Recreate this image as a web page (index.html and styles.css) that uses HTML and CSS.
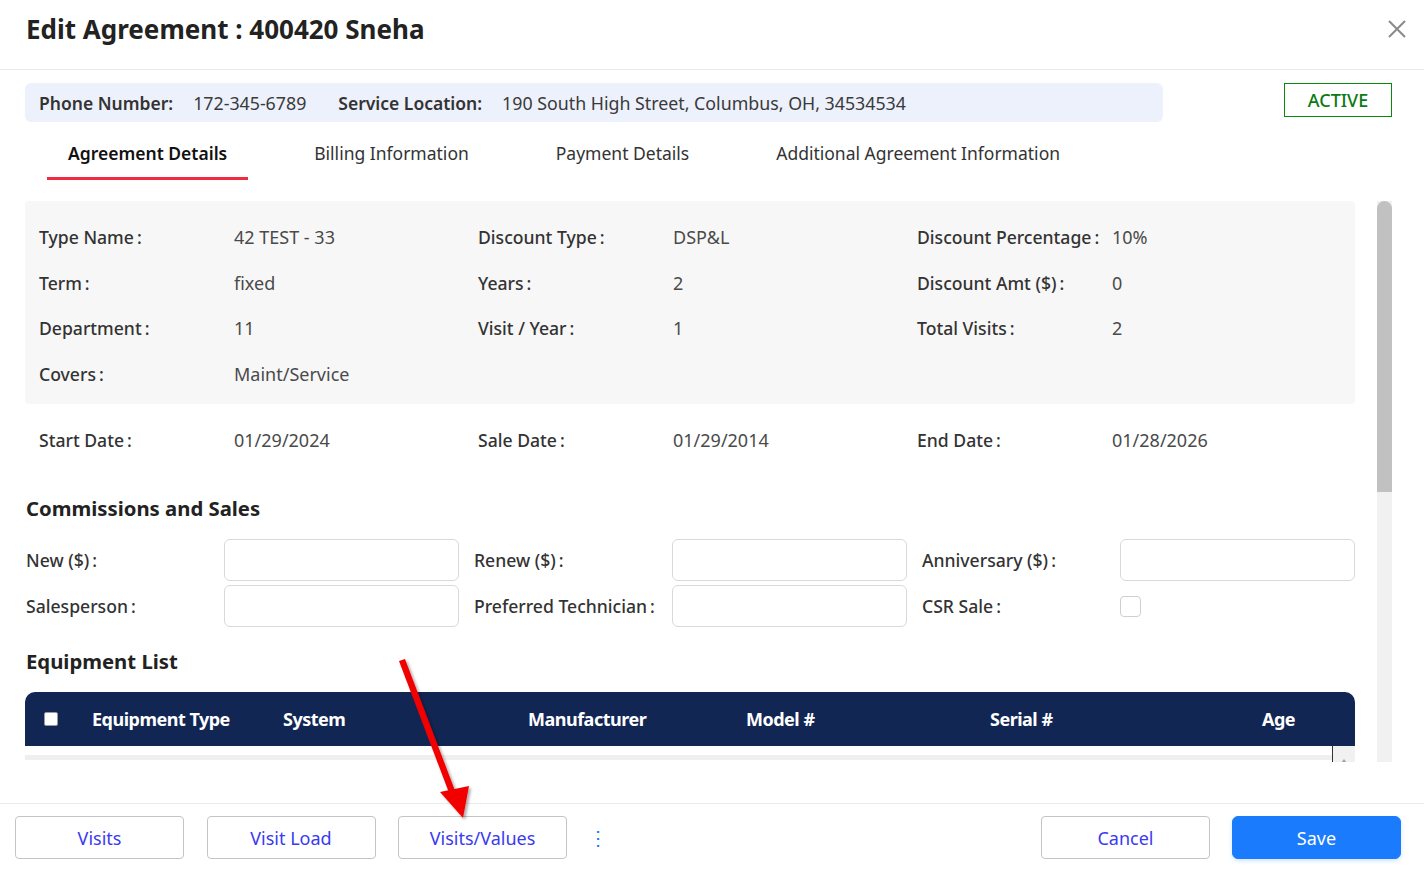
FILE: index.html
```html
<!DOCTYPE html>
<html>
<head>
<meta charset="utf-8">
<link rel="stylesheet" href="styles.css">
</head>
<body>
<div class="modal">
  <header class="modal-header">
    <h1 class="title">Edit Agreement : 400420 Sneha</h1>
    <button class="close" aria-label="Close">
      <svg width="20" height="20" viewBox="0 0 20 20"><path d="M2 2 L18 18 M18 2 L2 18" stroke="#8a8a8a" stroke-width="2" fill="none"/></svg>
    </button>
  </header>

  <div class="info-row">
    <div class="info-bar">
      <span class="info-label">Phone Number:</span><span class="info-value">172-345-6789</span>
      <span class="info-label">Service Location:</span><span class="info-value">190 South High Street, Columbus, OH, 34534534</span>
    </div>
    <div class="status">ACTIVE</div>
  </div>

  <nav class="tabs">
    <div class="tab active">Agreement Details</div>
    <div class="tab">Billing Information</div>
    <div class="tab">Payment Details</div>
    <div class="tab">Additional Agreement Information</div>
  </nav>

  <div class="scroll-area">
    <div class="content">
      <div class="details-box">
        <div class="kv"><span class="k">Type Name<i>:</i></span><span class="v">42 TEST - 33</span></div>
        <div class="kv"><span class="k">Discount Type<i>:</i></span><span class="v">DSP&amp;L</span></div>
        <div class="kv"><span class="k">Discount Percentage<i>:</i></span><span class="v">10%</span></div>
        <div class="kv"><span class="k">Term<i>:</i></span><span class="v">fixed</span></div>
        <div class="kv"><span class="k">Years<i>:</i></span><span class="v">2</span></div>
        <div class="kv"><span class="k">Discount Amt ($)<i>:</i></span><span class="v">0</span></div>
        <div class="kv"><span class="k">Department<i>:</i></span><span class="v">11</span></div>
        <div class="kv"><span class="k">Visit / Year<i>:</i></span><span class="v">1</span></div>
        <div class="kv"><span class="k">Total Visits<i>:</i></span><span class="v">2</span></div>
        <div class="kv"><span class="k">Covers<i>:</i></span><span class="v">Maint/Service</span></div>
      </div>
      <div class="dates">
        <div class="kv"><span class="k">Start Date<i>:</i></span><span class="v">01/29/2024</span></div>
        <div class="kv"><span class="k">Sale Date<i>:</i></span><span class="v">01/29/2014</span></div>
        <div class="kv"><span class="k">End Date<i>:</i></span><span class="v">01/28/2026</span></div>
      </div>

      <h2 class="section">Commissions and Sales</h2>
      <div class="form-grid">
        <div class="field"><label>New ($)<i>:</i></label><div class="input"></div></div>
        <div class="field"><label>Renew ($)<i>:</i></label><div class="input"></div></div>
        <div class="field"><label>Anniversary ($)<i>:</i></label><div class="input"></div></div>
        <div class="field"><label>Salesperson<i>:</i></label><div class="input"></div></div>
        <div class="field"><label>Preferred Technician<i>:</i></label><div class="input"></div></div>
        <div class="field"><label>CSR Sale<i>:</i></label><div class="check-wrap"><span class="checkbox"></span></div></div>
      </div>

      <h2 class="section eq">Equipment List</h2>
      <div class="table">
        <div class="thead">
          <div class="th th-check"><span class="hcheck"></span></div>
          <div class="th">Equipment Type</div>
          <div class="th">System</div>
          <div class="th">Manufacturer</div>
          <div class="th">Model #</div>
          <div class="th">Serial #</div>
          <div class="th">Age</div>
        </div>
        <div class="tbody">
          <div class="stripe"></div>
          <div class="mini-scroll"><span class="mini-arrow"></span></div>
        </div>
      </div>
    </div>
    <div class="scrollbar"><div class="thumb"></div></div>
  </div>

  <footer class="modal-footer">
    <div class="left-actions">
      <button class="btn">Visits</button>
      <button class="btn">Visit Load</button>
      <button class="btn">Visits/Values</button>
      <span class="more">&#8942;</span>
    </div>
    <div class="right-actions">
      <button class="btn">Cancel</button>
      <button class="btn primary">Save</button>
    </div>
  </footer>

  <svg class="annotation" width="1424" height="879" viewBox="0 0 1424 879">
    <defs>
      <filter id="sh" x="-20%" y="-20%" width="140%" height="140%">
        <feDropShadow dx="2" dy="2" stdDeviation="1.5" flood-color="#000" flood-opacity="0.35"/>
      </filter>
    </defs>
    <g filter="url(#sh)">
      <path d="M399 661 L405 659 L457 796 L451 798 Z" fill="#f20000"/>
      <path d="M440 792 L469 786 L463 818 Z" fill="#f20000"/>
    </g>
  </svg>
</div>
</body>
</html>
```

FILE: styles.css
```css
* { box-sizing: border-box; }
html, body { margin: 0; padding: 0; background: #fff; }
body {
  font-family: "Noto Sans", "Open Sans", sans-serif;
  color: #333;
}
.modal {
  position: relative;
  width: 1424px;
  height: 879px;
  overflow: hidden;
  background: #fff;
  display: flex;
  flex-direction: column;
}
.modal-header {
  height: 70px;
  border-bottom: 1px solid #e9e9e9;
  display: flex;
  align-items: center;
  justify-content: space-between;
  padding: 0 17px 12px 26px;
  flex: none;
}
.title {
  margin: 0;
  font-size: 26px;
  font-weight: 700;
  color: #222;
  letter-spacing: 0;
}
.close {
  border: 0;
  background: none;
  padding: 0;
  width: 20px;
  height: 20px;
  margin-top: 0;
  cursor: pointer;
}
.info-row {
  display: flex;
  align-items: flex-start;
  justify-content: space-between;
  padding: 13px 32px 0 25px;
  flex: none;
}
.info-bar {
  width: 1138px;
  height: 39px;
  background: #edf1fc;
  border-radius: 6px;
  display: flex;
  align-items: center;
  padding-left: 14px;
}
.info-label { font-size: 17.5px; font-weight: 600; color: #333; margin-right: 20px; }
.info-value { font-size: 17.8px; color: #3a3a3a; margin-right: 32px; }
.status {
  width: 108px;
  height: 34px;
  border: 1px solid #0b8a10;
  color: #0b7a10;
  font-size: 18px;
  font-weight: 500;
  display: flex;
  align-items: center;
  justify-content: center;
}
.tabs {
  display: flex;
  gap: 45px;
  padding-left: 47px;
  height: 58px;
  margin-top: 8px;
  flex: none;
}
.tab {
  padding: 0 21px 1px;
  font-size: 17.5px;
  color: #333;
  height: 50px;
  display: flex;
  align-items: center;
  border-bottom: 3px solid transparent;
}
.tab.active {
  font-weight: 600;
  color: #111;
  border-bottom-color: #ef2b40;
}
.scroll-area {
  display: flex;
  gap: 22px;
  padding-left: 25px;
  height: 561px;
  margin-top: 13px;
  overflow: hidden;
  flex: none;
}
.content { width: 1330px; flex: none; }
.scrollbar {
  width: 15px;
  height: 561px;
  background: #f1f1f1;
  flex: none;
}
.thumb {
  width: 15px;
  height: 291px;
  background: #c1c1c1;
  border-radius: 8px 8px 0 0;
}
.details-box {
  background: #f7f7f7;
  border-radius: 4px;
  padding: 13.5px 14px 7.5px 14px;
  display: grid;
  grid-template-columns: repeat(3, 439px);
  grid-auto-rows: 45.5px;
}
.dates {
  display: grid;
  grid-template-columns: repeat(3, 439px);
  grid-auto-rows: 45.5px;
  padding: 0 14px;
  margin-top: 13px;
}
.kv {
  display: flex;
  align-items: center;
}
.k {
  width: 195px;
  flex: none;
  color: #333;
  font-size: 17.6px;
  font-weight: 500;
}
.k i, label i { font-style: normal; margin-left: 3px; }
.v { color: #4a4a4a; font-size: 18px; }
.section {
  margin: 31px 0 0 1px;
  font-size: 20.3px;
  font-weight: 700;
  color: #222;
  line-height: 29px;
}
.section.eq { margin-top: 19.5px; }
.form-grid {
  margin-top: 16.5px;
  display: grid;
  grid-template-columns: repeat(3, 448px);
  grid-auto-rows: 42px;
  row-gap: 4px;
}
.field {
  display: flex;
  align-items: center;
  font-size: 17.6px;
  padding-left: 1px;
}
.field label {
  width: 198px;
  flex: none;
  color: #333;
  font-weight: 500;
}
.input {
  width: 235px;
  height: 42px;
  border: 1px solid #d9d9d9;
  border-radius: 6px;
  background: #fff;
}
.check-wrap { width: 235px; display: flex; }
.checkbox {
  width: 21px;
  height: 21px;
  border: 1px solid #cfcfcf;
  border-radius: 4px;
  background: #fff;
}
.table { margin-top: 16.5px; }
.thead {
  height: 54px;
  background: #122654;
  border-radius: 10px 10px 0 0;
  display: grid;
  grid-template-columns: 67px 191px 245px 218px 244px 272px 93px;
  align-items: center;
  color: #fff;
  font-size: 18px;
  font-weight: 700;
  letter-spacing: -0.5px;
}
.th { white-space: nowrap; }
.th-check { padding-left: 19px; display: flex; }
.hcheck {
  width: 14px;
  height: 14px;
  background: #fff;
  border-radius: 2px;
  border: 1px solid #999;
}
.tbody {
  position: relative;
  height: 20px;
  display: flex;
}
.stripe {
  margin-top: 9px;
  height: 5px;
  width: 1307px;
  background: #efefef;
}
.mini-scroll {
  width: 23px;
  height: 20px;
  background: #f1f1f1;
  border-left: 1px solid #333;
  display: flex;
  justify-content: center;
  padding-top: 13px;
}
.mini-arrow {
  width: 0; height: 0;
  border-left: 3px solid transparent;
  border-right: 3px solid transparent;
  border-bottom: 4px solid #a3a3a3;
}
.modal-footer {
  margin-top: 41px;
  border-top: 1px solid #ebebeb;
  height: 75px;
  display: flex;
  justify-content: space-between;
  align-items: flex-start;
  padding: 12px 23px 0 15px;
  flex: none;
}
.left-actions, .right-actions {
  display: flex;
  align-items: center;
  gap: 22px;
}
.left-actions { gap: 22.5px; }
.btn {
  width: 169px;
  height: 43px;
  border: 1px solid #c4c4c4;
  border-radius: 4px;
  background: #fff;
  color: #3a3af0;
  font-family: "Noto Sans", "Open Sans", sans-serif;
  font-size: 18px;
  padding: 0;
}
.btn.primary {
  background: #1a7bfd;
  border-color: #1a7bfd;
  color: #fff;
  border-radius: 6px;
  box-shadow: 0 2px 4px rgba(26, 123, 253, 0.2);
}
.more {
  color: #1a7bfd;
  font-size: 20px;
  margin-left: -2px;
  line-height: 1;
}
.annotation {
  position: absolute;
  left: 0;
  top: 0;
  pointer-events: none;
}
```
